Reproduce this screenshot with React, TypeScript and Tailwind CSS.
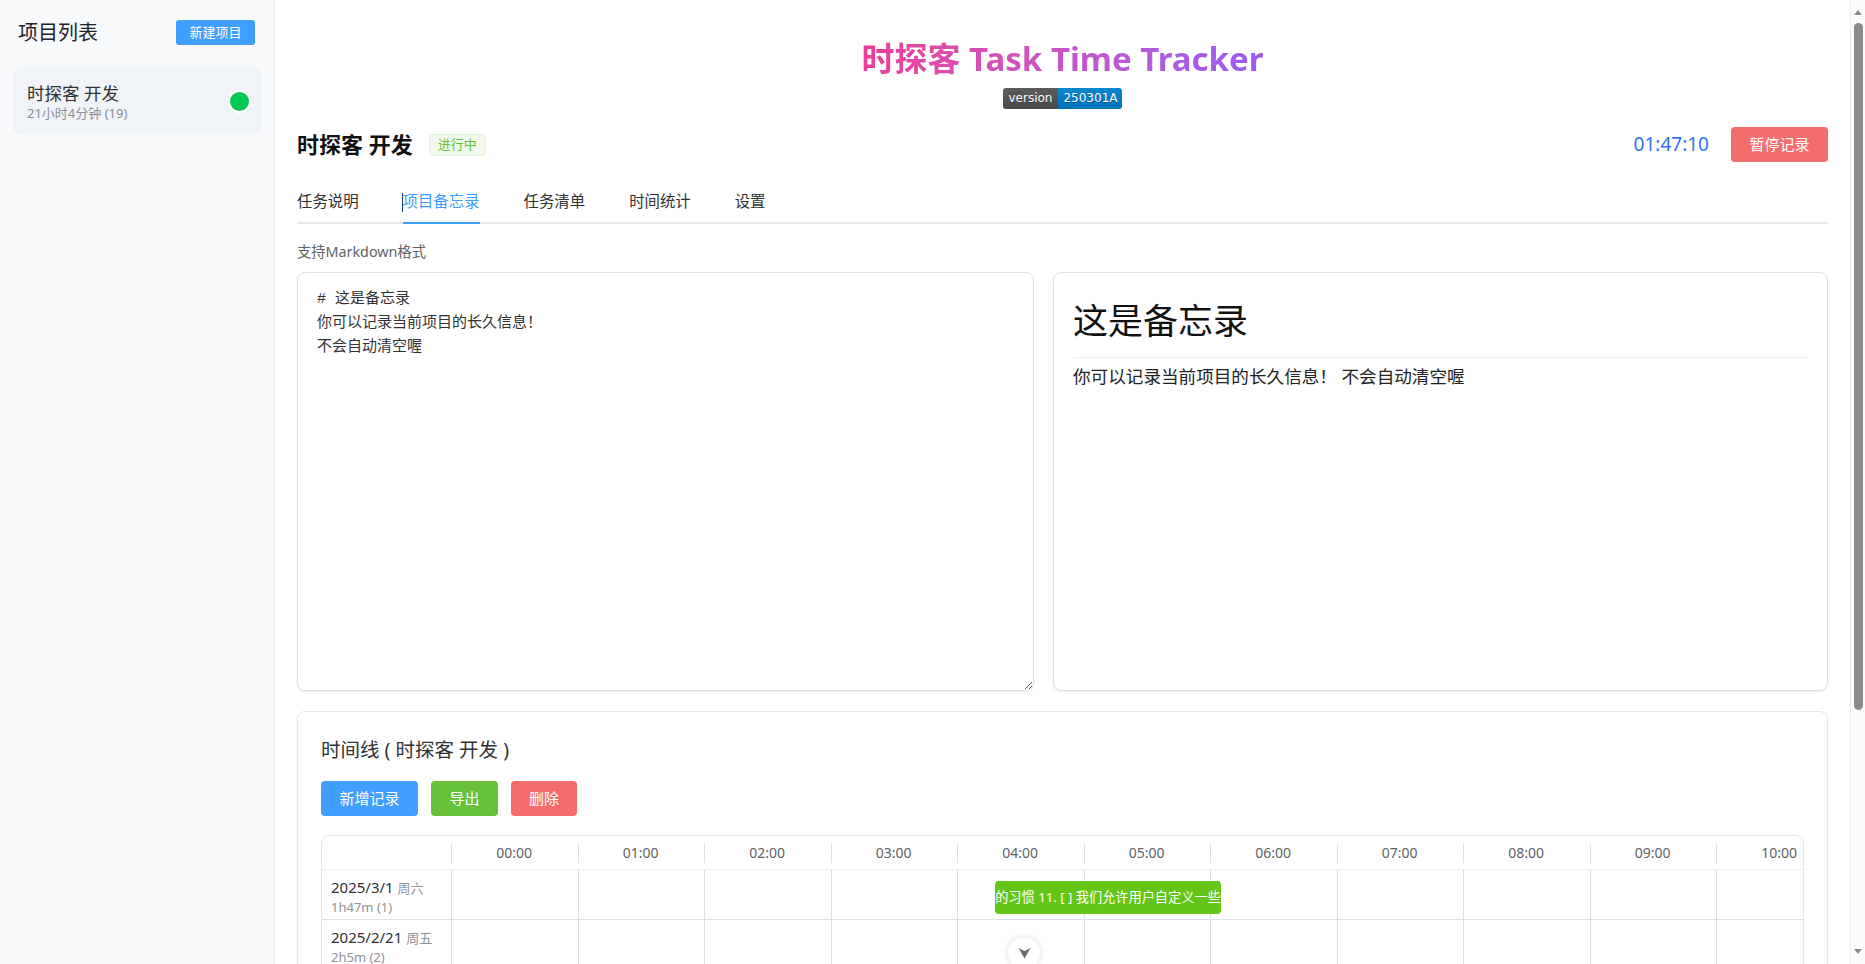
import { useState } from "react";

const hours = Array.from({ length: 24 }, (_, i) => `${String(i).padStart(2, "0")}:00`);

const days = [
  { date: "2025/3/1", week: "周六", total: "1h47m (1)" },
  { date: "2025/2/21", week: "周五", total: "2h5m (2)" },
  { date: "2025/2/20", week: "周四", total: "3h12m (3)" },
  { date: "2025/2/19", week: "周三", total: "2h40m (2)" },
  { date: "2025/2/18", week: "周二", total: "4h3m (4)" },
  { date: "2025/2/17", week: "周一", total: "1h20m (1)" },
  { date: "2025/2/16", week: "周日", total: "3h5m (3)" },
  { date: "2025/2/15", week: "周六", total: "2h12m (3)" },
];

const tabs = ["任务说明", "项目备忘录", "任务清单", "时间统计", "设置"];

export default function App() {
  const [active] = useState(1);

  return (
    <div className="flex min-h-screen bg-white text-[#303133] font-['Noto_Sans','Noto_Sans_CJK_SC',sans-serif]">
      {/* SIDEBAR */}
      <aside className="w-[275px] shrink-0 bg-[#f8f9fb] border-r border-[#e4e7ed]">
        <div className="flex items-center justify-between pl-[18px] pr-[19px] pt-[20px] h-[45px]">
          <div className="text-[20px] text-[#1f2329] leading-none">项目列表</div>
          <button className="w-[79px] h-[25px] rounded-[3px] bg-[#409eff] text-white text-[13px] leading-none">
            新建项目
          </button>
        </div>
        <div className="mx-[13px] mt-[22px] h-[68px] rounded-[8px] bg-[#f0f3f8] flex items-center justify-between pl-[14px] pr-[10px]">
          <div>
            <div className="text-[17.5px] leading-[24px] text-[#303133]">时探客 开发</div>
            <div className="text-[13px] leading-[17px] text-[#8a8f99]">21小时4分钟 (19)</div>
          </div>
          <div className="w-[23px] h-[23px] rounded-full bg-[#00c853] border-2 border-white" />
        </div>
      </aside>

      {/* MAIN */}
      <main className="flex-1 min-w-0 px-[22px] pt-[35px] pb-[20px]">
        <h1 className="h-[48px] flex items-center justify-center text-[33px] font-bold">
          <span className="bg-gradient-to-r from-[#f03c96] to-[#985cf7] bg-clip-text text-transparent">
            时探客 Task Time Tracker
          </span>
        </h1>
        <div className="mt-[5px] flex justify-center">
          <div className="flex h-[21px] rounded-[3px] overflow-hidden text-[12px] text-white font-['DejaVu_Sans',sans-serif] leading-[21px] [text-shadow:0_1px_0_rgba(1,1,1,0.3)]">
            <span className="px-[6px] bg-gradient-to-b from-[#5c5c5c] to-[#4a4a4a]">version</span>
            <span className="px-[5px] bg-gradient-to-b from-[#0a86cf] to-[#0074b8]">250301A</span>
          </div>
        </div>

        {/* PROJECT HEADER */}
        <div className="mt-[18px] h-[35px] flex items-center justify-between">
          <div className="flex items-center">
            <div className="text-[22px] font-bold text-[#111]">时探客 开发</div>
            <span className="ml-[16px] h-[22px] px-[8px] flex items-center rounded-[4px] bg-[#f0f9eb] border border-[#e1f3d8] text-[#67c23a] text-[13px]">
              进行中
            </span>
          </div>
          <div className="flex items-center">
            <span className="text-[19px] text-[#3370ff]">01:47:10</span>
            <button className="ml-[22px] w-[97px] h-[35px] rounded-[4px] bg-[#f56c6c] text-white text-[15px]">
              暂停记录
            </button>
          </div>
        </div>

        {/* TABS */}
        <div className="mt-[20px] flex border-b-2 border-[#e4e7ed]">
          {tabs.map((t, i) => (
            <div
              key={t}
              className={`relative h-[40px] flex items-center text-[15.4px] ${i === 0 ? "pr-[22px]" : "px-[22px]"} ${
                i === active ? "text-[#409eff]" : "text-[#303133]"
              }`}
            >
              {i === active && <span className="absolute left-[21px] top-[11px] w-px h-[19px] bg-[#1e3a8a]" />}
              {t}
              {i === active && <span className="absolute left-[22px] right-[22px] -bottom-[2px] h-[2px] bg-[#409eff]" />}
            </div>
          ))}
        </div>

        <div className="mt-[18px] text-[14.3px] leading-[20px] text-[#606266]">支持Markdown格式</div>

        {/* EDITORS */}
        <div className="mt-[10px] flex gap-[19px] h-[419px]">
          <textarea
            defaultValue={"# 这是备忘录\n你可以记录当前项目的长久信息！\n不会自动清空喔"}
            className="w-[737px] h-full shrink-0 rounded-[8px] border border-[#dcdfe6] shadow-[0_1px_2px_rgba(0,0,0,0.08)] px-[19px] pt-[15px] text-[15px] leading-[24px] text-[#333] font-['Liberation_Mono','Noto_Sans_CJK_SC',monospace] outline-none"
          />
          <div className="flex-1 h-full rounded-[8px] border border-[#dcdfe6] shadow-[0_1px_2px_rgba(0,0,0,0.08)] px-[19px] pt-[27px]">
            <div className="text-[35px] leading-[42px] pb-[15px] border-b border-[#eaecef] text-[#111]">这是备忘录</div>
            <p className="mt-[5px] text-[17.6px] leading-[26px] text-[#222]">你可以记录当前项目的长久信息！ 不会自动清空喔</p>
          </div>
        </div>

        {/* TIMELINE */}
        <div className="mt-[20px] rounded-[8px] border border-[#e4e7ed] shadow-[0_1px_2px_rgba(0,0,0,0.05)] px-[23px] pt-[24px] pb-[24px]">
          <div className="text-[19.5px] leading-[27px] text-[#303133]">时间线 ( 时探客 开发 )</div>

          <div className="mt-[18px] flex gap-[13px]">
            <button className="w-[97px] h-[35px] rounded-[4px] bg-[#409eff] text-white text-[15px]">新增记录</button>
            <button className="w-[67px] h-[35px] rounded-[4px] bg-[#67c23a] text-white text-[15px]">导出</button>
            <button className="w-[66px] h-[35px] rounded-[4px] bg-[#f56c6c] text-white text-[15px]">删除</button>
          </div>

          <div className="mt-[19px] rounded-[8px] border border-[#e4e7ed] overflow-hidden">
            <div className="w-max">
              {/* HEADER */}
              <div className="flex h-[34px] border-b border-[#ebeef5]">
                <div className="w-[129px] shrink-0" />
                {hours.map((h) => (
                  <div key={h} className="relative w-[126.5px] shrink-0 flex items-center justify-center text-[14px] text-[#606266]">
                    <span className="absolute left-0 top-[8px] h-[19px] w-px bg-[#dcdfe6]" />
                    {h}
                  </div>
                ))}
              </div>

              {/* ROWS */}
              {days.map((d, ri) => (
                <div key={d.date} className="relative flex h-[50px] border-b border-[#dcdfe6]">
                  <div className="w-[129px] shrink-0 pl-[9px] pt-[8px]">
                    <div className="text-[15px] leading-[19px] text-[#303133]">
                      {d.date} <span className="text-[13px] text-[#909399]">{d.week}</span>
                    </div>
                    <div className="text-[13px] leading-[18px] text-[#909399]">{d.total}</div>
                  </div>
                  {hours.map((h) => (
                    <div key={h} className="w-[126.5px] shrink-0 border-l border-[#dcdfe6]" />
                  ))}
                  {ri === 0 && (
                    <div
                      className="absolute top-[11px] h-[33px] rounded-[4px] bg-[#63c617] text-white text-[13.2px] flex items-center justify-center overflow-hidden whitespace-nowrap"
                      style={{ left: 673, width: 226 }}
                    >
                      的习惯 11. [ ] 我们允许用户自定义一些
                    </div>
                  )}
                </div>
              ))}
            </div>
          </div>
        </div>
      </main>

      {/* PAGE SCROLLBAR */}
      <div className="sticky top-0 self-start h-screen w-[15px] shrink-0 bg-[#fcfcfc] border-l border-[#ededed] flex flex-col items-center">
        <svg width="8" height="5" viewBox="0 0 8 5" className="mt-[10px]">
          <path d="M0 5 L4 0 L8 5 Z" fill="#8a8a8a" />
        </svg>
        <div className="mt-[8px] w-[9px] h-[687px] rounded-full bg-[#8b8b8b]" />
        <svg width="8" height="5" viewBox="0 0 8 5" className="mt-auto mb-[10px]">
          <path d="M0 0 L8 0 L4 5 Z" fill="#8a8a8a" />
        </svg>
      </div>

      {/* SCROLL DOWN BUTTON */}
      <button className="fixed left-[1008px] top-[937px] w-[32px] h-[32px] rounded-full bg-white shadow-[0_0_6px_rgba(0,0,0,0.15)] flex items-center justify-center">
        <svg width="13" height="12" viewBox="0 0 13 12">
          <path d="M0.5 1 L6.5 4 L12.5 1 L6.5 11.5 Z" fill="#6b6b6b" />
        </svg>
      </button>
    </div>
  );
}
